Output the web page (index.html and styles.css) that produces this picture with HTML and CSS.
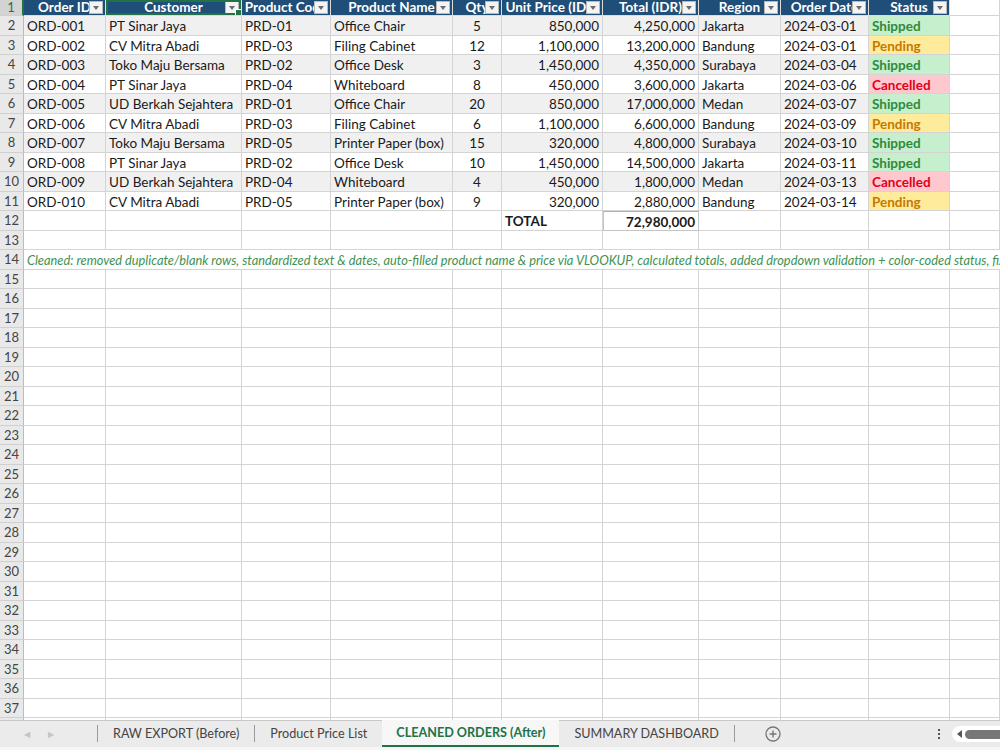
FILE: index.html
```html
<!DOCTYPE html>
<html lang="en">
<head>
  <meta charset="UTF-8">
  <title>CLEANED ORDERS (After)</title>
  <link rel="stylesheet" href="styles.css">
</head>
<body>
  <div class="workbook">
    <div class="sheet"></div>
    <div class="tab-bar">
      <div class="tab-nav">
        <span class="nav-arrow">&#9664;</span>
        <span class="nav-arrow">&#9654;</span>
      </div>
      <div class="tabs">
        <span class="tab">RAW EXPORT (Before)</span>
        <span class="tab">Product Price List</span>
        <span class="tab active">CLEANED ORDERS (After)</span>
        <span class="tab">SUMMARY DASHBOARD</span>
      </div>
      <span class="add-sheet">
        <svg width="16" height="16" viewBox="0 0 16 16">
          <circle cx="8" cy="8" r="7" fill="none" stroke="#777" stroke-width="1.3"/>
          <path d="M8 4.5v7M4.5 8h7" stroke="#777" stroke-width="1.4"/>
        </svg>
      </span>
      <span class="spacer"></span>
      <span class="more-dots"><i></i><i></i><i></i></span>
      <div class="hscroll">
        <span class="hscroll-arrow"></span>
        <span class="hscroll-thumb"></span>
      </div>
    </div>
  </div>
  <script>
    let headers = ['Order ID', 'Customer', 'Product Code', 'Product Name', 'Qty', 'Unit Price (IDR)', 'Total (IDR)', 'Region', 'Order Date', 'Status']

    let orders = [
      ['ORD-001', 'PT Sinar Jaya', 'PRD-01', 'Office Chair', 5, 850000, 'Jakarta', '2024-03-01', 'Shipped'],
      ['ORD-002', 'CV Mitra Abadi', 'PRD-03', 'Filing Cabinet', 12, 1100000, 'Bandung', '2024-03-01', 'Pending'],
      ['ORD-003', 'Toko Maju Bersama', 'PRD-02', 'Office Desk', 3, 1450000, 'Surabaya', '2024-03-04', 'Shipped'],
      ['ORD-004', 'PT Sinar Jaya', 'PRD-04', 'Whiteboard', 8, 450000, 'Jakarta', '2024-03-06', 'Cancelled'],
      ['ORD-005', 'UD Berkah Sejahtera', 'PRD-01', 'Office Chair', 20, 850000, 'Medan', '2024-03-07', 'Shipped'],
      ['ORD-006', 'CV Mitra Abadi', 'PRD-03', 'Filing Cabinet', 6, 1100000, 'Bandung', '2024-03-09', 'Pending'],
      ['ORD-007', 'Toko Maju Bersama', 'PRD-05', 'Printer Paper (box)', 15, 320000, 'Surabaya', '2024-03-10', 'Shipped'],
      ['ORD-008', 'PT Sinar Jaya', 'PRD-02', 'Office Desk', 10, 1450000, 'Jakarta', '2024-03-11', 'Shipped'],
      ['ORD-009', 'UD Berkah Sejahtera', 'PRD-04', 'Whiteboard', 4, 450000, 'Medan', '2024-03-13', 'Cancelled'],
      ['ORD-010', 'CV Mitra Abadi', 'PRD-05', 'Printer Paper (box)', 9, 320000, 'Bandung', '2024-03-14', 'Pending']
    ]

    let note = 'Cleaned: removed duplicate/blank rows, standardized text & dates, auto-filled product name & price via VLOOKUP, calculated totals, added dropdown validation + color-coded status, fixed number formats.'

    let $sheet = document.querySelector('.sheet')
    let colCount = 11
    let lastRow = 38

    render()

    function render () {
      let fragment = document.createDocumentFragment()
      let grandTotal = 0

      // 表头
      fragment.appendChild(cell('1', 'row-head selected'))
      headers.forEach((h, i) => {
        let c = cell('', 'th' + (i === 1 ? ' active-cell' : ''))
        c.appendChild(cell(h, 'th-text'))
        c.appendChild(cell('', 'filter-btn'))
        fragment.appendChild(c)
      })
      fragment.appendChild(cell('', 'td'))

      // 数据行
      orders.forEach((o, i) => {
        let total = o[4] * o[5]
        grandTotal += total
        let band = i % 2 === 0 ? ' band' : ''
        fragment.appendChild(cell(i + 2, 'row-head'))
        fragment.appendChild(cell(o[0], 'td' + band))
        fragment.appendChild(cell(o[1], 'td' + band))
        fragment.appendChild(cell(o[2], 'td' + band))
        fragment.appendChild(cell(o[3], 'td' + band))
        fragment.appendChild(cell(o[4], 'td center' + band))
        fragment.appendChild(cell(fmt(o[5]), 'td num' + band))
        fragment.appendChild(cell(fmt(total), 'td num' + band))
        fragment.appendChild(cell(o[6], 'td' + band))
        fragment.appendChild(cell(o[7], 'td' + band))
        fragment.appendChild(cell(o[8], 'td status status-' + o[8].toLowerCase()))
        fragment.appendChild(cell('', 'td'))
      })

      // 合计
      fragment.appendChild(cell(12, 'row-head'))
      for (let c = 0; c < colCount; c++) {
        if (c === 5) fragment.appendChild(cell('TOTAL', 'td bold'))
        else if (c === 6) fragment.appendChild(cell(fmt(grandTotal), 'td num bold total-cell'))
        else fragment.appendChild(cell('', 'td'))
      }

      for (let r = 13; r <= lastRow; r++) {
        fragment.appendChild(cell(r, 'row-head'))
        if (r === 14) {
          fragment.appendChild(cell(note, 'td note'))
          continue
        }
        for (let c = 0; c < colCount; c++) {
          fragment.appendChild(cell('', 'td'))
        }
      }
      $sheet.appendChild(fragment)
    }

    function fmt (n) {
      return n.toLocaleString('en-US')
    }

    function cell (text, className) {
      let node = document.createElement('div')
      node.className = className
      if (text !== '') node.textContent = text
      return node
    }
  </script>
</body>
</html>
```

FILE: styles.css
```css
* {
  box-sizing: border-box;
}
body {
  margin: 0;
  font-family: Lato, "Liberation Sans", sans-serif;
  font-size: 13.5px;
  color: #1a1a1a;
  background: #fff;
}

.workbook {
  width: 1000px;
  height: 750px;
  display: flex;
  flex-direction: column;
  overflow: hidden;
}

.sheet {
  height: 720px;
  overflow: hidden;
  display: grid;
  grid-template-columns: 24px 82px 136px 89px 122px 49px 101px 96px 82px 88px 81px 50px;
  grid-template-rows: 16px;
  grid-auto-rows: 19.5px;
}

.row-head {
  background: #e9e9e9;
  color: #444;
  border-right: 1px solid #bcbcbc;
  border-bottom: 1px solid #d0d0d0;
  text-align: center;
  font-size: 13px;
  line-height: 19px;
}
.row-head.selected {
  background: #d3d3d3;
  color: #217346;
  line-height: 15px;
  border-right: 2px solid #217346;
}

.td {
  border-right: 1px solid #d4d4d4;
  border-bottom: 1px solid #d4d4d4;
  padding: 0 3px;
  line-height: 20px;
  white-space: nowrap;
  overflow: hidden;
}
.td.band {
  background: #f0f0f0;
}
.td.center {
  text-align: center;
}
.td.num {
  text-align: right;
}
.td.bold {
  font-weight: 700;
}
.total-cell {
  border: 1px solid #c4c4c4;
  border-top-color: #b0b0b0;
}

.th {
  position: relative;
  background: #1f4e78;
  color: #fff;
  font-weight: 700;
  border-right: 1px solid #dcdcdc;
  border-bottom: 1px solid #dcdcdc;
  overflow: hidden;
}
.th-text {
  text-align: center;
  white-space: nowrap;
  line-height: 15px;
  font-size: 13.5px;
}
.filter-btn {
  position: absolute;
  right: 2px;
  top: 1px;
  width: 14px;
  height: 13px;
  background: #f4f4f4;
  border: 1px solid #b8b8b8;
}
.filter-btn::after {
  content: '';
  position: absolute;
  left: 3px;
  top: 4px;
  border-left: 3.5px solid transparent;
  border-right: 3.5px solid transparent;
  border-top: 4px solid #6b6b6b;
}
.th.active-cell::before {
  content: '';
  position: absolute;
  inset: 0;
  border: 2px solid #217346;
  z-index: 2;
}
.th.active-cell::after {
  content: '';
  position: absolute;
  right: -1px;
  bottom: -1px;
  width: 5px;
  height: 5px;
  background: #217346;
  border: 1px solid #fff;
  z-index: 3;
}

.status {
  font-weight: 700;
}
.status-shipped {
  background: #c6efce;
  color: #2f8a3c;
}
.status-pending {
  background: #ffeb9c;
  color: #c47a00;
}
.status-cancelled {
  background: #ffc7ce;
  color: #e0001b;
}

.note {
  grid-column: 2 / -1;
  font-style: italic;
  font-size: 12.8px;
  color: #3f9152;
  border-right: none;
}

.tab-bar {
  flex: 1;
  display: flex;
  align-items: stretch;
  background: #ebebeb;
  border-top: 1px solid #c8c8c8;
  border-bottom: 3px solid #f6f6f6;
  color: #444;
  font-size: 12.6px;
}
.tab-nav {
  width: 98px;
  display: flex;
  align-items: center;
  gap: 18px;
  padding-left: 24px;
  border-right: 1px solid #9a9a9a;
  margin: 4px 0 5px;
}
.nav-arrow {
  color: #c4c4c4;
  font-size: 8px;
}
.tabs {
  display: flex;
  align-items: stretch;
}
.tab {
  display: flex;
  align-items: center;
  padding: 0 15px;
  white-space: nowrap;
  margin: 4px 0 5px;
  border-right: 1px solid #9a9a9a;
}
.tab:nth-child(2) {
  border-right: none;
}
.tab.active {
  margin: -1px 0 0;
  padding: 0 14px;
  background: #f7f7f7;
  color: #217346;
  font-weight: 700;
  border-right: none;
  border-bottom: 2px solid #217346;
}
.add-sheet {
  display: flex;
  align-items: center;
  padding-left: 30px;
}
.spacer {
  flex: 1;
}
.more-dots {
  display: flex;
  flex-direction: column;
  justify-content: center;
  gap: 2px;
  padding-right: 12px;
}
.more-dots i {
  display: block;
  width: 2px;
  height: 2px;
  background: #555;
}
.hscroll {
  width: 48px;
  margin: 5px 0 5px;
  display: flex;
  align-items: center;
  background: #fff;
  border-radius: 9px 0 0 9px;
  padding-left: 5px;
  gap: 3px;
}
.hscroll-arrow {
  border-top: 4px solid transparent;
  border-bottom: 4px solid transparent;
  border-right: 5px solid #555;
}
.hscroll-thumb {
  flex: 1;
  height: 9px;
  background: #777;
  border-radius: 5px 0 0 5px;
}
```
